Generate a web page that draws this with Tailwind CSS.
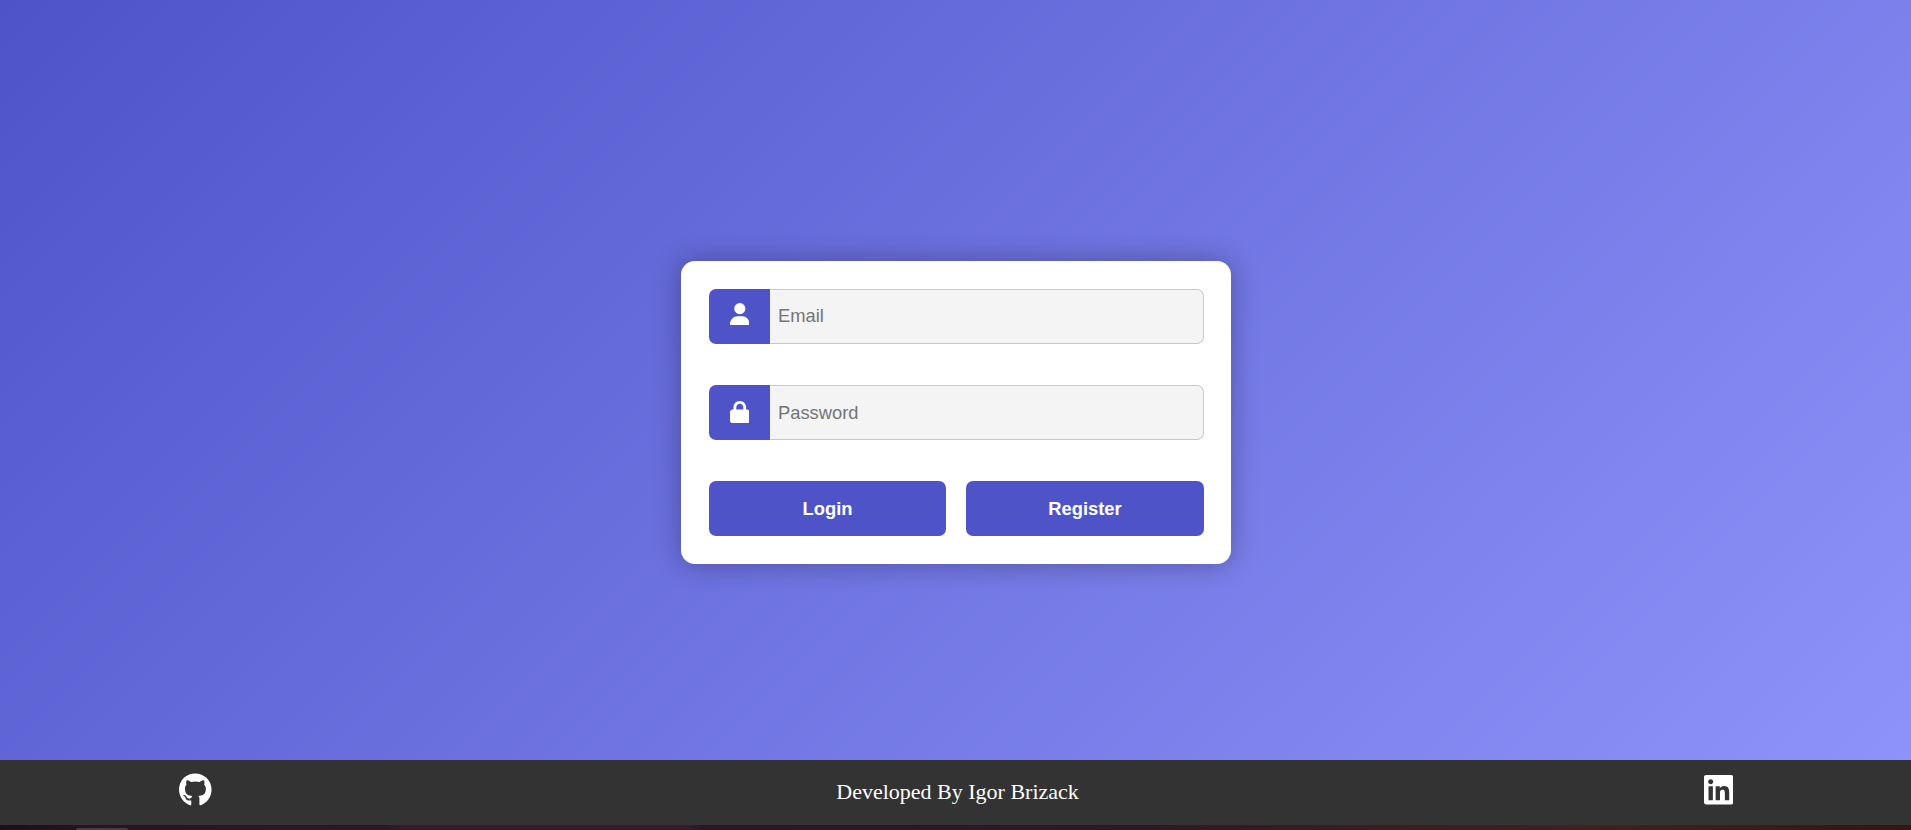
<!DOCTYPE html>
<html lang="en">
<head>
<meta charset="utf-8">
<title>Login</title>
<script src="https://cdn.jsdelivr.net/npm/@tailwindcss/browser@4"></script>
</head>
<body class="h-[830px] overflow-hidden flex flex-col bg-[#2a1521]">
<div class="h-[825px] shrink-0 flex flex-col bg-[linear-gradient(135deg,#4e54c8,#8f94fb)]">
  <main class="h-[760px] shrink-0 pt-[261px] pl-[681px]">
    <form class="w-[550px] h-[303px] rounded-[14px] bg-white px-[28px] pt-[28px] pr-[27px] flex flex-col gap-[41px] shadow-[0_0_28px_rgba(0,0,0,0.3)] font-['Liberation_Sans',sans-serif] text-[18.33px]">
      <div class="flex h-[55px]">
        <label for="email" class="w-[61px] shrink-0 rounded-l-[7px] bg-[#4e54c8] flex justify-center pt-[14px] pr-[0.4px]">
          <svg class="w-[19.6px] h-[22.4px]" viewBox="0 0 448 512" fill="white"><path d="M224 256A128 128 0 1 0 224 0a128 128 0 1 0 0 256zm-45.7 48C79.8 304 0 383.8 0 482.3C0 498.7 13.3 512 29.7 512H418.3c16.4 0 29.7-13.3 29.7-29.7C448 383.8 368.2 304 269.7 304H178.3z"/></svg>
        </label>
        <input id="email" type="email" placeholder="Email" class="min-w-0 flex-1 rounded-r-[7px] border border-l-0 border-[#c8c8c8] bg-[#f4f4f4] pl-[8px] pb-px placeholder:text-[#757575] outline-none">
      </div>
      <div class="flex h-[55px]">
        <label for="password" class="w-[61px] shrink-0 rounded-l-[7px] bg-[#4e54c8] flex justify-center pt-[15.5px] pr-[0.4px]">
          <svg class="w-[19.6px] h-[22.4px]" viewBox="0 0 448 512" fill="white"><path d="M144 144v48H304V144c0-44.2-35.8-80-80-80s-80 35.8-80 80zM80 192V144C80 64.5 144.5 0 224 0s144 64.5 144 144v48h16c35.3 0 64 28.7 64 64V448c0 35.3-28.7 64-64 64H64c-35.3 0-64-28.7-64-64V256c0-35.3 28.7-64 64-64H80z"/></svg>
        </label>
        <input id="password" type="password" placeholder="Password" class="min-w-0 flex-1 rounded-r-[7px] border border-l-0 border-[#c8c8c8] bg-[#f4f4f4] pl-[8px] pt-px placeholder:text-[#757575] outline-none">
      </div>
      <div class="flex h-[55px] gap-5 font-bold text-white">
        <button type="button" class="w-[237px] rounded-[7px] bg-[#4e54c8] pt-px">Login</button>
        <button type="button" class="w-[238px] rounded-[7px] bg-[#4e54c8] pt-px">Register</button>
      </div>
    </form>
  </main>
  <footer class="h-[65px] bg-[#333] flex items-center justify-between pl-[179px] pr-[178px] pb-1.5 text-white font-['Liberation_Serif',serif] text-[22px]">
    <svg class="w-[32.6px] h-[33.6px]" viewBox="0 0 496 512" fill="white"><path d="M165.9 397.4c0 2-2.3 3.6-5.2 3.6-3.3.3-5.6-1.3-5.6-3.6 0-2 2.3-3.6 5.2-3.6 3-.3 5.6 1.3 5.6 3.6zM244.8 8C106.1 8 0 113.3 0 252c0 110.9 69.8 205.8 169.5 239.2 12.8 2.3 17.3-5.6 17.3-12.1 0-6.2-.3-40.4-.3-61.4 0 0-70 15-84.7-29.8 0 0-11.4-29.1-27.8-36.6 0 0-22.9-15.7 1.6-15.4 0 0 24.9 2 38.6 25.8 21.9 38.6 58.6 27.5 72.9 20.9 2.3-16 8.8-27.1 16-33.7-55.9-6.2-112.3-14.3-112.3-110.5 0-27.5 7.6-41.3 23.6-58.9-2.6-6.5-11.1-33.3 2.6-67.9 20.9-6.5 69 27 69 27 20-5.6 41.5-8.5 62.8-8.5s42.8 2.9 62.8 8.5c0 0 48.1-33.6 69-27 13.7 34.7 5.2 61.4 2.6 67.9 16 17.7 25.8 31.5 25.8 58.9 0 96.5-58.9 104.2-114.8 110.5 9.2 7.9 17 22.9 17 46.4 0 33.7-.3 75.4-.3 83.6 0 6.5 4.6 14.4 17.3 12.1C428.2 457.8 496 362.9 496 252 496 113.3 383.5 8 244.8 8z"/></svg>
    <p class="pt-[3px]">Developed By Igor Brizack</p>
    <svg class="w-[29.4px] h-[33.6px]" viewBox="0 0 448 512" fill="white"><path d="M416 32H31.9C14.3 32 0 46.5 0 64.3v383.4C0 465.5 14.3 480 31.9 480H416c17.6 0 32-14.5 32-32.3V64.3c0-17.8-14.4-32.3-32-32.3zM135.4 416H69V202.2h66.5V416zm-33.2-243c-21.3 0-38.5-17.3-38.5-38.5S80.9 96 102.2 96c21.2 0 38.5 17.3 38.5 38.5 0 21.3-17.2 38.5-38.5 38.5zm282.1 243h-66.4V312c0-24.8-.5-56.7-34.5-56.7-34.6 0-39.9 27-39.9 54.9V416h-66.4V202.2h63.7v29.2h.9c8.9-16.8 30.6-34.5 62.9-34.5 67.2 0 79.7 44.3 79.7 101.9V416z"/></svg>
  </footer>
</div>
<div class="h-[5px] shrink-0 pt-[3px] pl-[76px] bg-[linear-gradient(90deg,#1c1018_0%,#2c1520_7%,#2f1723_20%,#371a2b_21%,#371a2b_36%,#2d1523_37%,#321823_60%,#3f1e20_78%,#41201b_85%,#34160f_100%)]">
  <div class="w-[52px] h-[2px] rounded-t-[2px] bg-[#4c3b45]"></div>
</div>
</body>
</html>
